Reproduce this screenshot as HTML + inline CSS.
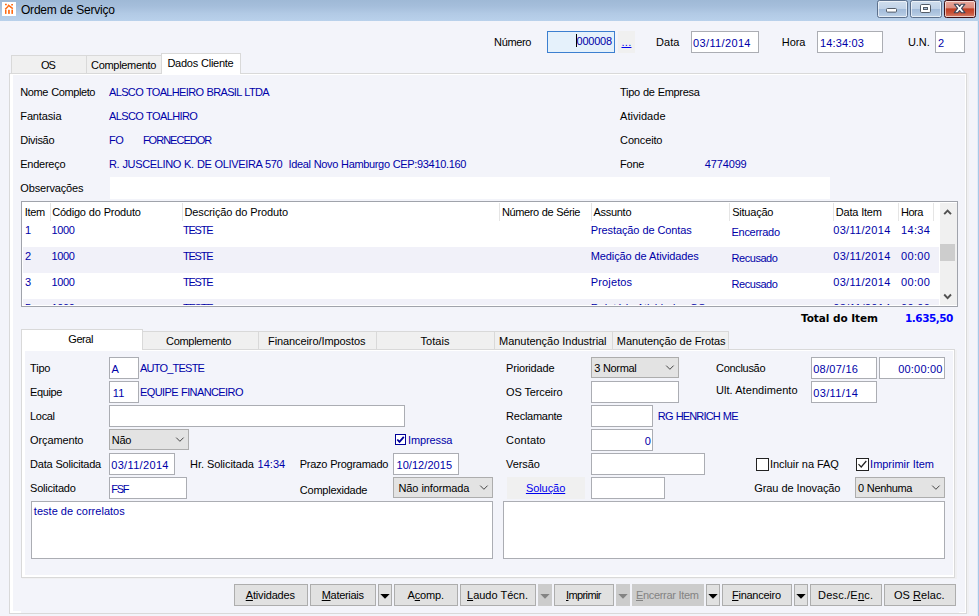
<!DOCTYPE html><html><head><meta charset="utf-8"><title>Ordem de Serviço</title><style>
html,body{margin:0;padding:0;}
body{width:979px;height:616px;overflow:hidden;background:#f3f4fa;font-family:"Liberation Sans",sans-serif;font-size:11px;line-height:13px;position:relative;}
div{position:absolute;box-sizing:border-box;white-space:pre;}
.t{height:13px;}
.f{background:#fff;border:1px solid #abadb3;}
.titlebar{left:0;top:0;width:979px;height:21px;background:linear-gradient(#9fb9d6,#a5bedb 30%,#b2cae5 65%,#b9d1eb);}
.panel{border:1px solid #d9d9d9;background:#fff;}
.page{background:#f3f4fa;}
.tab{border:1px solid #d9d9d9;border-bottom:none;background:#f0f0f0;}
.tabsel{border:1px solid #d9d9d9;border-bottom:none;background:#fff;}
.btn{border:1px solid #adadad;background:#e1e1e1;}
.btnd{background:#cccccc;}
.combo{border:1px solid #adadad;background:#e3e3e3;}
.hs{width:1px;background:#e5e5e5;}
svg{position:absolute;overflow:visible;}
</style></head><body>
<div class="titlebar"></div>
<svg style="left:2px;top:2px" width="14" height="14" viewBox="2 2 14 14"><rect x="2" y="2" width="14" height="14" fill="#fff"/><g stroke="#ff6a13" stroke-width="1.5" fill="none"><path d="M5 4.6H6.8M11.2 4.8H13M7.9 4.9L12.8 8.7M8.3 6.3L5.2 9.2"/></g><g fill="#ff6a13"><rect x="5" y="9.6" width="1.5" height="4.3"/><rect x="8.1" y="9.8" width="1.7" height="4.1"/><rect x="11.4" y="9.6" width="1.6" height="4.3"/></g></svg>
<div class="t" style="left:21.0px;top:3.6px;color:#000;letter-spacing:-0.21px;word-spacing:0.21px;font-size:12px;line-height:13px;">Ordem de Serviço</div>
<div class="wb" style="left:877px;top:0px;width:31px;height:18px;background:linear-gradient(#cfdded 0%,#c1d3e8 47%,#a2bbd9 50%,#adc4df 75%,#bfd3e9 100%);border:1px solid #5c708c;border-radius:2.5px;box-shadow:inset 0 0 0 1px rgba(255,255,255,.6);"></div>
<div class="wb" style="left:910px;top:0px;width:32px;height:18px;background:linear-gradient(#cfdded 0%,#c1d3e8 47%,#a2bbd9 50%,#adc4df 75%,#bfd3e9 100%);border:1px solid #5c708c;border-radius:2.5px;box-shadow:inset 0 0 0 1px rgba(255,255,255,.6);"></div>
<div class="wb" style="left:944px;top:0px;width:32px;height:18px;background:linear-gradient(#e9a89c 0%,#dc8c7d 45%,#bf3d22 48%,#c95238 75%,#d4806c 100%);border:1px solid #3d0f14;border-radius:2.5px;box-shadow:inset 0 0 0 1px rgba(255,255,255,.6);"></div>
<svg style="left:886px;top:8px" width="12" height="5"><rect x="0.5" y="0.5" width="10" height="3.6" rx="1" fill="#fff" stroke="#535c68"/></svg>
<svg style="left:920px;top:4px" width="12" height="10"><rect x="0.5" y="0.5" width="10" height="8" rx="1.2" fill="#fff" stroke="#535c68"/><rect x="3.5" y="3.5" width="4" height="2" fill="#a9bfd8" stroke="#535c68"/></svg>
<svg style="left:953px;top:3px" width="14" height="11" viewBox="0 0 14 11"><path d="M1.3 1.2H4.8L6.6 3.3L8.4 1.2H11.9L8.6 5.4L11.9 9.7H8.4L6.6 7.6L4.8 9.7H1.3L4.6 5.4Z" fill="#fff" stroke="#3d4558" stroke-width="1.15" stroke-linejoin="round"/></svg>
<div class="" style="left:977px;top:21px;width:1px;height:595px;background:#e3ebf6;"></div>
<div class="" style="left:978px;top:21px;width:1px;height:595px;background:#a9c7e7;"></div>
<div class="t" style="left:494.1px;top:36px;color:#000;letter-spacing:-0.35px;">Número</div>
<div class="f" style="left:547px;top:31px;width:68px;height:22px;background:#e5f1fb;border-color:#3c7fd0;"></div>
<div class="t" style="left:576.5px;top:35px;color:#0000a8;letter-spacing:-0.24px;">000008</div>
<div class="" style="left:576px;top:34px;width:1px;height:13px;background:#000;"></div>
<div class="" style="left:618px;top:31px;width:17px;height:22px;background:#f0f0f0;"></div>
<div class="t" style="left:621.5px;top:36px;color:#0000ee;letter-spacing:0.26px;text-decoration:underline;">...</div>
<div class="t" style="left:655.9px;top:36px;color:#000;letter-spacing:0.12px;">Data</div>
<div class="f" style="left:691px;top:31px;width:68px;height:22px;"></div>
<div class="t" style="left:693.1px;top:37.4px;color:#0000a8;letter-spacing:0.35px;">03/11/2014</div>
<div class="t" style="left:781.8px;top:36px;color:#000;letter-spacing:-0.05px;">Hora</div>
<div class="f" style="left:817px;top:31px;width:66px;height:22px;"></div>
<div class="t" style="left:820.0px;top:37.4px;color:#0000a8;letter-spacing:0.15px;">14:34:03</div>
<div class="t" style="left:908.0px;top:36px;color:#000;letter-spacing:-0.07px;">U.N.</div>
<div class="f" style="left:935px;top:31px;width:30px;height:22px;"></div>
<div class="t" style="left:937.9px;top:37.4px;color:#0000a8;">2</div>
<div class="panel" style="left:9px;top:73px;width:958px;height:541px;"></div>
<div class="page" style="left:13px;top:75px;width:952px;height:538px;"></div>
<div class="" style="left:10px;top:611px;width:11px;height:2px;background:#fff;"></div>
<div class="" style="left:959px;top:612px;width:7px;height:1px;background:#fff;"></div>
<div class="" style="left:967px;top:73px;width:2px;height:541px;background:#f0f0f2;"></div>
<div class="tab" style="left:11px;top:55px;width:76px;height:18px;"></div>
<div class="t" style="left:40.9px;top:58.5px;color:#000;letter-spacing:-1.01px;">OS</div>
<div class="tab" style="left:86px;top:55px;width:76px;height:18px;"></div>
<div class="t" style="left:91.0px;top:58.5px;color:#000;letter-spacing:-0.30px;">Complemento</div>
<div class="tabsel" style="left:161px;top:53px;width:80px;height:21px;"></div>
<div class="" style="left:162px;top:73px;width:78px;height:1px;background:#fff;"></div>
<div class="t" style="left:167.4px;top:57px;color:#000;letter-spacing:-0.25px;word-spacing:0.25px;">Dados Cliente</div>
<div class="t" style="left:20.3px;top:86px;color:#000;letter-spacing:-0.39px;word-spacing:0.39px;">Nome Completo</div>
<div class="t" style="left:20.3px;top:110px;color:#000;letter-spacing:-0.14px;">Fantasia</div>
<div class="t" style="left:20.3px;top:134px;color:#000;letter-spacing:-0.31px;">Divisão</div>
<div class="t" style="left:20.3px;top:158px;color:#000;letter-spacing:-0.27px;">Endereço</div>
<div class="t" style="left:20.3px;top:182px;color:#000;letter-spacing:-0.16px;">Observações</div>
<div class="t" style="left:109.0px;top:86px;color:#0000a8;letter-spacing:-0.65px;word-spacing:0.65px;">ALSCO TOALHEIRO BRASIL LTDA</div>
<div class="t" style="left:109.0px;top:110px;color:#0000a8;letter-spacing:-0.61px;word-spacing:0.61px;">ALSCO TOALHIRO</div>
<div class="t" style="left:109.0px;top:134px;color:#0000a8;letter-spacing:-0.38px;">FO</div>
<div class="t" style="left:142.9px;top:134px;color:#0000a8;letter-spacing:-0.99px;">FORNECEDOR</div>
<div class="t" style="left:109.0px;top:158px;color:#0000a8;letter-spacing:-0.34px;word-spacing:0.34px;">R. JUSCELINO K. DE OLIVEIRA 570  Ideal Novo Hamburgo CEP:93410.160</div>
<div class="" style="left:110px;top:177px;width:720px;height:22px;background:#fff;"></div>
<div class="t" style="left:620.1px;top:86px;color:#000;letter-spacing:-0.30px;word-spacing:0.30px;">Tipo de Empresa</div>
<div class="t" style="left:620.1px;top:110px;color:#000;letter-spacing:0.02px;">Atividade</div>
<div class="t" style="left:620.1px;top:134px;color:#000;letter-spacing:-0.15px;">Conceito</div>
<div class="t" style="left:620.1px;top:158px;color:#000;letter-spacing:-0.23px;">Fone</div>
<div class="t" style="left:704.8px;top:158px;color:#0000a8;letter-spacing:-0.15px;">4774099</div>
<div class="f" style="left:21px;top:201px;width:937px;height:106px;border-color:#a0a3ab;overflow:hidden;"><div style="left:1px;top:45px;width:916px;height:26px;background:#f1f1f9"></div><div style="left:1px;top:97px;width:916px;height:6px;background:#f1f1f9"></div><div style="left:918px;top:1px;width:17px;height:102px;background:#f0f0f0"></div><div style="left:918px;top:42px;width:15px;height:17px;background:#cdcdcd"></div></div>
<div class="hs" style="left:50px;top:203px;width:1px;height:18px;"></div>
<div class="hs" style="left:182px;top:203px;width:1px;height:18px;"></div>
<div class="hs" style="left:499px;top:203px;width:1px;height:18px;"></div>
<div class="hs" style="left:591px;top:203px;width:1px;height:18px;"></div>
<div class="hs" style="left:729px;top:203px;width:1px;height:18px;"></div>
<div class="hs" style="left:833px;top:203px;width:1px;height:18px;"></div>
<div class="hs" style="left:898px;top:203px;width:1px;height:18px;"></div>
<div class="hs" style="left:933px;top:203px;width:1px;height:18px;"></div>
<div class="t" style="left:24.7px;top:206px;color:#000;letter-spacing:-0.30px;">Item</div>
<div class="t" style="left:52.2px;top:206px;color:#000;letter-spacing:-0.22px;word-spacing:0.22px;">Código do Produto</div>
<div class="t" style="left:184.5px;top:206px;color:#000;letter-spacing:-0.13px;word-spacing:0.13px;">Descrição do Produto</div>
<div class="t" style="left:502.0px;top:206px;color:#000;letter-spacing:-0.39px;word-spacing:0.39px;">Número de Série</div>
<div class="t" style="left:593.5px;top:206px;color:#000;letter-spacing:-0.29px;">Assunto</div>
<div class="t" style="left:732.2px;top:206px;color:#000;letter-spacing:-0.22px;">Situação</div>
<div class="t" style="left:835.8px;top:206px;color:#000;letter-spacing:-0.24px;word-spacing:0.24px;">Data Item</div>
<div class="t" style="left:901.0px;top:206px;color:#000;letter-spacing:-0.51px;">Hora</div>
<div class="t" style="left:25.0px;top:224px;color:#0000a8;">1</div>
<div class="t" style="left:51.5px;top:224px;color:#0000a8;letter-spacing:-0.39px;">1000</div>
<div class="t" style="left:182.9px;top:224px;color:#0000a8;letter-spacing:-1.20px;">TESTE</div>
<div class="t" style="left:590.8px;top:224px;color:#0000a8;letter-spacing:-0.11px;word-spacing:0.11px;">Prestação de Contas</div>
<div class="t" style="left:731.5px;top:226px;color:#0000a8;letter-spacing:-0.28px;">Encerrado</div>
<div class="t" style="left:833.2px;top:224px;color:#0000a8;letter-spacing:0.32px;">03/11/2014</div>
<div class="t" style="left:901.0px;top:224px;color:#0000a8;letter-spacing:0.32px;">14:34</div>
<div class="t" style="left:25.0px;top:250px;color:#0000a8;">2</div>
<div class="t" style="left:51.5px;top:250px;color:#0000a8;letter-spacing:-0.39px;">1000</div>
<div class="t" style="left:182.9px;top:250px;color:#0000a8;letter-spacing:-1.20px;">TESTE</div>
<div class="t" style="left:590.8px;top:250px;color:#0000a8;letter-spacing:-0.12px;word-spacing:0.12px;">Medição de Atividades</div>
<div class="t" style="left:731.5px;top:252px;color:#0000a8;letter-spacing:-0.45px;">Recusado</div>
<div class="t" style="left:833.2px;top:250px;color:#0000a8;letter-spacing:0.32px;">03/11/2014</div>
<div class="t" style="left:901.0px;top:250px;color:#0000a8;letter-spacing:0.32px;">00:00</div>
<div class="t" style="left:25.0px;top:276px;color:#0000a8;">3</div>
<div class="t" style="left:51.5px;top:276px;color:#0000a8;letter-spacing:-0.39px;">1000</div>
<div class="t" style="left:182.9px;top:276px;color:#0000a8;letter-spacing:-1.20px;">TESTE</div>
<div class="t" style="left:590.8px;top:276px;color:#0000a8;letter-spacing:0.13px;">Projetos</div>
<div class="t" style="left:731.5px;top:278px;color:#0000a8;letter-spacing:-0.45px;">Recusado</div>
<div class="t" style="left:833.2px;top:276px;color:#0000a8;letter-spacing:0.32px;">03/11/2014</div>
<div class="t" style="left:901.0px;top:276px;color:#0000a8;letter-spacing:0.32px;">00:00</div>
<div style="left:22px;top:299px;width:917px;height:6px;overflow:hidden">
<div style="left:-22px;top:-299px;width:979px;height:616px">
<div class="t" style="left:25.0px;top:302px;color:#0000a8;">5</div>
<div class="t" style="left:51.5px;top:302px;color:#0000a8;letter-spacing:-0.39px;">1000</div>
<div class="t" style="left:182.9px;top:302px;color:#0000a8;letter-spacing:-1.20px;">TESTE</div>
<div class="t" style="left:590.8px;top:302px;color:#0000a8;letter-spacing:-0.07px;word-spacing:0.07px;">Relatório Atividades OS</div>
<div class="t" style="left:833.2px;top:302px;color:#0000a8;letter-spacing:0.32px;">03/11/2014</div>
<div class="t" style="left:901.0px;top:302px;color:#0000a8;letter-spacing:0.32px;">00:00</div>
</div></div>
<svg style="left:943px;top:208px" width="10" height="8"><path d="M1.2 6.2L4.6 2.6L8 6.2" fill="none" stroke="#505050" stroke-width="1.9"/></svg>
<svg style="left:943px;top:293px" width="10" height="8"><path d="M1.2 1.5L4.6 5.1L8 1.5" fill="none" stroke="#505050" stroke-width="1.9"/></svg>
<div class="t" style="left:801.0px;top:312px;color:#000;letter-spacing:-0.08px;word-spacing:0.08px;font-weight:bold;font-family:'DejaVu Sans',sans-serif;font-size:10.5px;line-height:13px;">Total do Item</div>
<div class="t" style="left:905.0px;top:312px;color:#0000ff;letter-spacing:-0.49px;font-weight:bold;font-family:'DejaVu Sans',sans-serif;font-size:10.5px;line-height:13px;">1.635,50</div>
<div class="panel" style="left:21px;top:349px;width:934px;height:229px;"></div>
<div class="page" style="left:25px;top:351px;width:928px;height:224px;"></div>
<div class="" style="left:955px;top:350px;width:2px;height:229px;background:#f0f0f2;"></div>
<div class="" style="left:22px;top:578px;width:934px;height:1px;background:#f0f0f2;"></div>
<div class="tab" style="left:142px;top:331px;width:118px;height:18px;"></div>
<div class="t" style="left:166.0px;top:334.5px;color:#000;letter-spacing:-0.30px;">Complemento</div>
<div class="tab" style="left:258px;top:331px;width:119px;height:18px;"></div>
<div class="t" style="left:268.0px;top:334.5px;color:#000;letter-spacing:-0.09px;">Financeiro/Impostos</div>
<div class="tab" style="left:376px;top:331px;width:119px;height:18px;"></div>
<div class="t" style="left:420.5px;top:334.5px;color:#000;letter-spacing:0.05px;">Totais</div>
<div class="tab" style="left:494px;top:331px;width:120px;height:18px;"></div>
<div class="t" style="left:499.1px;top:334.5px;color:#000;letter-spacing:-0.04px;word-spacing:0.04px;">Manutenção Industrial</div>
<div class="tab" style="left:612px;top:331px;width:117px;height:18px;"></div>
<div class="t" style="left:616.8px;top:334.5px;color:#000;letter-spacing:-0.08px;word-spacing:0.08px;">Manutenção de Frotas</div>
<div class="tabsel" style="left:21px;top:329px;width:122px;height:21px;"></div>
<div class="" style="left:22px;top:349px;width:120px;height:1px;background:#fff;"></div>
<div class="t" style="left:68.3px;top:333px;color:#000;letter-spacing:-0.43px;">Geral</div>
<div class="t" style="left:30.1px;top:362px;color:#000;letter-spacing:-0.20px;">Tipo</div>
<div class="t" style="left:30.1px;top:386px;color:#000;letter-spacing:-0.41px;">Equipe</div>
<div class="t" style="left:30.1px;top:410px;color:#000;letter-spacing:-0.35px;">Local</div>
<div class="t" style="left:30.1px;top:434px;color:#000;letter-spacing:-0.13px;">Orçamento</div>
<div class="t" style="left:30.1px;top:458px;color:#000;letter-spacing:-0.22px;word-spacing:0.22px;">Data Solicitada</div>
<div class="t" style="left:30.1px;top:482px;color:#000;letter-spacing:-0.22px;">Solicitado</div>
<div class="f" style="left:109px;top:357px;width:30px;height:22px;"></div>
<div class="t" style="left:111.5px;top:363px;color:#0000a8;">A</div>
<div class="t" style="left:140.0px;top:362px;color:#0000a8;letter-spacing:-0.78px;">AUTO_TESTE</div>
<div class="f" style="left:109px;top:381px;width:30px;height:22px;"></div>
<div class="t" style="left:112.7px;top:387px;color:#0000a8;letter-spacing:0.18px;">11</div>
<div class="t" style="left:140.0px;top:386px;color:#0000a8;letter-spacing:-0.60px;word-spacing:0.60px;">EQUIPE FINANCEIRO</div>
<div class="f" style="left:109px;top:405px;width:296px;height:22px;"></div>
<div class="combo" style="left:109px;top:429px;width:80px;height:21px;"></div>
<div class="t" style="left:111.7px;top:434px;color:#000;letter-spacing:-0.19px;">Não</div>
<svg style="left:175px;top:436px" width="10" height="7"><path d="M1.2 1.6L4.9 5.3L8.6 1.6" fill="none" stroke="#444" stroke-width="1"/></svg>
<div class="f" style="left:109px;top:453px;width:66px;height:22px;"></div>
<div class="t" style="left:111.2px;top:459px;color:#0000a8;letter-spacing:0.34px;">03/11/2014</div>
<div class="f" style="left:109px;top:477px;width:78px;height:22px;"></div>
<div class="t" style="left:111.2px;top:483px;color:#0000a8;letter-spacing:-1.20px;">FSF</div>
<div class="t" style="left:190.1px;top:458px;color:#000;letter-spacing:-0.08px;word-spacing:0.08px;">Hr. Solicitada</div>
<div class="t" style="left:257.5px;top:458px;color:#0000a8;letter-spacing:0.04px;">14:34</div>
<div class="t" style="left:299.8px;top:458px;color:#000;letter-spacing:-0.27px;word-spacing:0.27px;">Prazo Programado</div>
<div class="f" style="left:393px;top:453px;width:66px;height:22px;"></div>
<div class="t" style="left:396.5px;top:459px;color:#0000a8;letter-spacing:0.05px;">10/12/2015</div>
<div class="t" style="left:299.8px;top:484px;color:#000;letter-spacing:-0.24px;">Complexidade</div>
<div class="combo" style="left:393px;top:477px;width:100px;height:21px;"></div>
<div class="t" style="left:398.5px;top:482px;color:#000;letter-spacing:-0.11px;word-spacing:0.11px;">Não informada</div>
<svg style="left:479px;top:484px" width="10" height="7"><path d="M1.2 1.6L4.9 5.3L8.6 1.6" fill="none" stroke="#444" stroke-width="1"/></svg>
<svg style="left:395px;top:434px" width="12" height="12"><rect x="0.5" y="0.5" width="10" height="10" fill="#fff" stroke="#000098"/><path d="M2.3 5.5L4.5 7.9L8.8 2.9" fill="none" stroke="#000098" stroke-width="1.8"/></svg>
<div class="t" style="left:408.1px;top:434px;color:#0000a8;letter-spacing:-0.12px;">Impressa</div>
<div class="f" style="left:31px;top:501px;width:462px;height:58px;"></div>
<div class="t" style="left:33.8px;top:505px;color:#0000a8;letter-spacing:0.03px;word-spacing:-0.03px;">teste de correlatos</div>
<div class="t" style="left:506.1px;top:362px;color:#000;letter-spacing:-0.19px;">Prioridade</div>
<div class="t" style="left:506.1px;top:386px;color:#000;letter-spacing:-0.16px;word-spacing:0.16px;">OS Terceiro</div>
<div class="t" style="left:506.1px;top:410px;color:#000;letter-spacing:-0.26px;">Reclamante</div>
<div class="t" style="left:506.1px;top:434px;color:#000;letter-spacing:0.14px;">Contato</div>
<div class="t" style="left:506.1px;top:458px;color:#000;letter-spacing:-0.09px;">Versão</div>
<div class="combo" style="left:591px;top:357px;width:88px;height:21px;"></div>
<div class="t" style="left:594.2px;top:362px;color:#000;letter-spacing:-0.35px;word-spacing:0.35px;">3 Normal</div>
<svg style="left:665px;top:364px" width="10" height="7"><path d="M1.2 1.6L4.9 5.3L8.6 1.6" fill="none" stroke="#444" stroke-width="1"/></svg>
<div class="f" style="left:591px;top:381px;width:88px;height:22px;"></div>
<div class="f" style="left:591px;top:405px;width:62px;height:22px;"></div>
<div class="t" style="left:657.8px;top:410px;color:#0000a8;letter-spacing:-0.85px;word-spacing:0.85px;">RG HENRICH ME</div>
<div class="f" style="left:591px;top:429px;width:62px;height:22px;"></div>
<div class="t" style="left:644.8px;top:435px;color:#0000a8;">0</div>
<div class="f" style="left:591px;top:453px;width:114px;height:22px;"></div>
<div class="" style="left:507px;top:477px;width:78px;height:22px;background:#f0f0f0;"></div>
<div class="t" style="left:525.9px;top:482px;color:#0000ee;letter-spacing:-0.06px;text-decoration:underline;">Solução</div>
<div class="f" style="left:591px;top:477px;width:74px;height:22px;"></div>
<div class="f" style="left:503px;top:501px;width:442px;height:58px;"></div>
<div class="t" style="left:716.0px;top:362px;color:#000;letter-spacing:-0.31px;">Conclusão</div>
<div class="t" style="left:716.0px;top:384px;color:#000;letter-spacing:0.06px;word-spacing:-0.06px;">Ult. Atendimento</div>
<div class="f" style="left:811px;top:357px;width:66px;height:22px;"></div>
<div class="t" style="left:813.2px;top:363px;color:#0000a8;letter-spacing:0.27px;">08/07/16</div>
<div class="f" style="left:879px;top:357px;width:66px;height:22px;"></div>
<div class="t" style="left:898.2px;top:363px;color:#0000a8;letter-spacing:0.21px;">00:00:00</div>
<div class="f" style="left:811px;top:381px;width:66px;height:22px;"></div>
<div class="t" style="left:813.2px;top:387px;color:#0000a8;letter-spacing:0.38px;">03/11/14</div>
<svg style="left:756px;top:458px" width="13" height="13"><rect x="0.5" y="0.5" width="12" height="12" fill="#fff" stroke="#222"/></svg>
<div class="t" style="left:769.9px;top:458px;color:#000;letter-spacing:-0.06px;word-spacing:0.06px;">Incluir na FAQ</div>
<svg style="left:856px;top:458px" width="13" height="13"><rect x="0.5" y="0.5" width="12" height="12" fill="#fff" stroke="#222"/><path d="M2.5 6.2L5.2 9L10.3 3" fill="none" stroke="#222" stroke-width="1.2"/></svg>
<div class="t" style="left:870.1px;top:458px;color:#0000a8;letter-spacing:-0.02px;word-spacing:0.02px;">Imprimir Item</div>
<div class="t" style="left:754.3px;top:482px;color:#000;letter-spacing:-0.10px;word-spacing:0.10px;">Grau de Inovação</div>
<div class="combo" style="left:855px;top:477px;width:90px;height:21px;"></div>
<div class="t" style="left:858.0px;top:482px;color:#000;letter-spacing:-0.34px;word-spacing:0.34px;">0 Nenhuma</div>
<svg style="left:931px;top:484px" width="10" height="7"><path d="M1.2 1.6L4.9 5.3L8.6 1.6" fill="none" stroke="#444" stroke-width="1"/></svg>
<div class="btn" style="left:234px;top:584px;width:74px;height:22px;"></div>
<div class="t" style="left:245.7px;top:589px;color:#000;letter-spacing:-0.16px;"><u>A</u>tividades</div>
<div class="btn" style="left:310px;top:584px;width:66px;height:22px;"></div>
<div class="t" style="left:321.7px;top:589px;color:#000;letter-spacing:-0.29px;"><u>M</u>ateriais</div>
<div class="btn" style="left:378px;top:584px;width:14px;height:22px;"></div>
<svg style="left:380px;top:594px" width="10" height="5"><path d="M0.3 0H9.7L5 4.7Z" fill="#000"/></svg>
<div class="btn" style="left:394px;top:584px;width:64px;height:22px;"></div>
<div class="t" style="left:407.5px;top:589px;color:#000;letter-spacing:-0.16px;">A<u>c</u>omp.</div>
<div class="btn" style="left:460px;top:584px;width:76px;height:22px;"></div>
<div class="t" style="left:467.0px;top:589px;color:#000;letter-spacing:0.00px;word-spacing:-0.00px;"><u>L</u>audo Técn.</div>
<div class="btnd" style="left:538px;top:584px;width:14px;height:22px;"></div>
<svg style="left:540px;top:594px" width="10" height="5"><path d="M0.3 0H9.7L5 4.7Z" fill="#838383"/></svg>
<div class="btn" style="left:554px;top:584px;width:60px;height:22px;"></div>
<div class="t" style="left:566.0px;top:589px;color:#000;letter-spacing:-0.60px;"><u>I</u>mprimir</div>
<div class="btnd" style="left:616px;top:584px;width:14px;height:22px;"></div>
<svg style="left:618px;top:594px" width="10" height="5"><path d="M0.3 0H9.7L5 4.7Z" fill="#838383"/></svg>
<div class="btnd" style="left:632px;top:584px;width:72px;height:22px;"></div>
<div class="t" style="left:636.0px;top:589px;color:#838383;letter-spacing:-0.33px;word-spacing:0.33px;"><u>E</u>ncerrar Item</div>
<div class="btn" style="left:706px;top:584px;width:14px;height:22px;"></div>
<svg style="left:708px;top:594px" width="10" height="5"><path d="M0.3 0H9.7L5 4.7Z" fill="#000"/></svg>
<div class="btn" style="left:722px;top:584px;width:70px;height:22px;"></div>
<div class="t" style="left:732.0px;top:589px;color:#000;letter-spacing:-0.26px;"><u>F</u>inanceiro</div>
<div class="btn" style="left:794px;top:584px;width:14px;height:22px;"></div>
<svg style="left:796px;top:594px" width="10" height="5"><path d="M0.3 0H9.7L5 4.7Z" fill="#000"/></svg>
<div class="btn" style="left:810px;top:584px;width:72px;height:22px;"></div>
<div class="t" style="left:818.0px;top:589px;color:#000;letter-spacing:0.20px;">Desc./E<u>n</u>c.</div>
<div class="btn" style="left:884px;top:584px;width:72px;height:22px;"></div>
<div class="t" style="left:894.0px;top:589px;color:#000;letter-spacing:0.05px;word-spacing:-0.05px;">OS <u>R</u>elac.</div>
</body></html>
